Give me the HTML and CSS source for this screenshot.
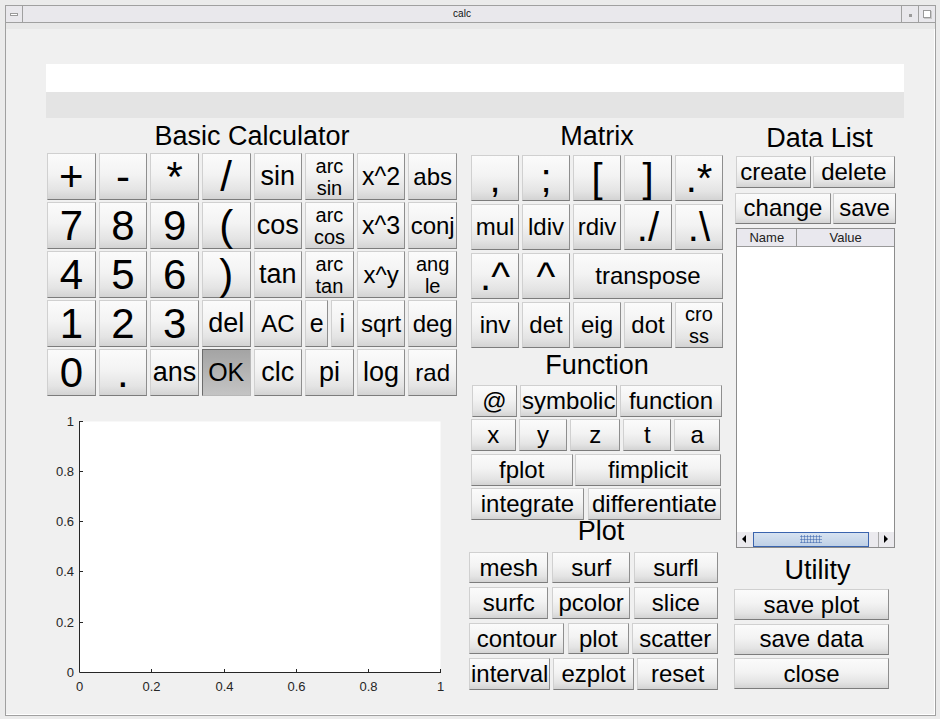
FILE: index.html
```html
<!DOCTYPE html>
<html lang="en">
<head>
<meta charset="utf-8">
<title>calc</title>
<link rel="stylesheet" href="styles.css">
</head>
<body>
<div class="window">
  <div class="titlebar">
    <div class="tb-box tb-menu"><span class="ico-min"></span></div>
    <div class="tb-title">calc</div>
    <div class="tb-box tb-shade"><span class="ico-dot"></span></div>
    <div class="tb-box tb-max"><span class="ico-max"></span></div>
  </div>
  <div class="menuband"></div>
  <div class="content">
    <div class="display">
      <div class="display-input"></div>
      <div class="display-status"></div>
    </div>
    <div class="main">
      <section class="col-left">
        <h2 class="label">Basic Calculator</h2>
        <div class="calc-grid">
          <button class="btn sym">+</button>
          <button class="btn sym">-</button>
          <button class="btn sym">*</button>
          <button class="btn sym">/</button>
          <button class="btn t27">sin</button>
          <button class="btn"><span class="two">arc<br>sin</span></button>
          <button class="btn t25">x^2</button>
          <button class="btn">abs</button>

          <button class="btn sym">7</button>
          <button class="btn sym">8</button>
          <button class="btn sym">9</button>
          <button class="btn sym">(</button>
          <button class="btn t27">cos</button>
          <button class="btn"><span class="two">arc<br>cos</span></button>
          <button class="btn t25">x^3</button>
          <button class="btn">conj</button>

          <button class="btn sym">4</button>
          <button class="btn sym">5</button>
          <button class="btn sym">6</button>
          <button class="btn sym">)</button>
          <button class="btn t27">tan</button>
          <button class="btn"><span class="two">arc<br>tan</span></button>
          <button class="btn">x^y</button>
          <button class="btn"><span class="two">ang<br>le</span></button>

          <button class="btn sym">1</button>
          <button class="btn sym">2</button>
          <button class="btn sym">3</button>
          <button class="btn t27">del</button>
          <button class="btn">AC</button>
          <div class="split">
            <button class="btn t25">e</button>
            <button class="btn t25">i</button>
          </div>
          <button class="btn">sqrt</button>
          <button class="btn">deg</button>

          <button class="btn sym">0</button>
          <button class="btn sym">.</button>
          <button class="btn t27">ans</button>
          <button class="btn pressed">OK</button>
          <button class="btn t27">clc</button>
          <button class="btn t27">pi</button>
          <button class="btn t27">log</button>
          <button class="btn">rad</button>
        </div>
        <svg class="axes" width="410" height="300" viewBox="0 0 410 300">
          <rect x="32.5" y="25.5" width="361" height="251" fill="#fff"/>
          <g stroke="#262626" stroke-width="1" fill="none">
            <path d="M32.5 25V276.5H394"/>
            <path d="M104.5 276.5v-3.5M177.5 276.5v-3.5M249.5 276.5v-3.5M321.5 276.5v-3.5M393.5 276.5v-3.5"/>
            <path d="M32.5 226.5h3.5M32.5 175.5h3.5M32.5 125.5h3.5M32.5 75.5h3.5M32.5 25.5h3.5"/>
          </g>
          <g class="ticklabels" fill="#262626" text-anchor="middle">
            <text x="32.5" y="295">0</text>
            <text x="104.5" y="295">0.2</text>
            <text x="177.5" y="295">0.4</text>
            <text x="249.5" y="295">0.6</text>
            <text x="321.5" y="295">0.8</text>
            <text x="393.5" y="295">1</text>
          </g>
          <g class="ticklabels" fill="#262626" text-anchor="end">
            <text x="27" y="281">0</text>
            <text x="27" y="231">0.2</text>
            <text x="27" y="180">0.4</text>
            <text x="27" y="130">0.6</text>
            <text x="27" y="80">0.8</text>
            <text x="27" y="30">1</text>
          </g>
        </svg>
      </section>

      <section class="col-mid">
        <h2 class="label">Matrix</h2>
        <div class="mat-grid">
          <button class="btn msym">,</button>
          <button class="btn msym">;</button>
          <button class="btn msym">[</button>
          <button class="btn msym">]</button>
          <button class="btn msym">.*</button>

          <button class="btn">mul</button>
          <button class="btn">ldiv</button>
          <button class="btn">rdiv</button>
          <button class="btn msym">./</button>
          <button class="btn msym">.\</button>

          <button class="btn msym">.^</button>
          <button class="btn msym">^</button>
          <button class="btn span3">transpose</button>

          <button class="btn">inv</button>
          <button class="btn">det</button>
          <button class="btn">eig</button>
          <button class="btn">dot</button>
          <button class="btn"><span class="two">cro<br>ss</span></button>
        </div>

        <h2 class="label fn-label">Function</h2>
        <div class="rows fn-rows">
          <div class="row fn-r1">
            <button class="btn">@</button>
            <button class="btn">symbolic</button>
            <button class="btn">function</button>
          </div>
          <div class="row fn-r2">
            <button class="btn">x</button>
            <button class="btn">y</button>
            <button class="btn">z</button>
            <button class="btn">t</button>
            <button class="btn">a</button>
          </div>
          <div class="row fn-r3">
            <button class="btn">fplot</button>
            <button class="btn">fimplicit</button>
          </div>
          <div class="row fn-r4">
            <button class="btn">integrate</button>
            <button class="btn">differentiate</button>
          </div>
        </div>

        <h2 class="label plot-label">Plot</h2>
        <div class="rows pl-rows">
          <div class="row pl-r12">
            <button class="btn">mesh</button>
            <button class="btn">surf</button>
            <button class="btn">surfl</button>
          </div>
          <div class="row pl-r12">
            <button class="btn">surfc</button>
            <button class="btn">pcolor</button>
            <button class="btn">slice</button>
          </div>
          <div class="row pl-r3">
            <button class="btn">contour</button>
            <button class="btn">plot</button>
            <button class="btn">scatter</button>
          </div>
          <div class="row pl-r4">
            <button class="btn">interval</button>
            <button class="btn">ezplot</button>
            <button class="btn">reset</button>
          </div>
        </div>
      </section>

      <section class="col-right">
        <h2 class="label dl-label">Data List</h2>
        <div class="row dl-r1">
          <button class="btn">create</button>
          <button class="btn">delete</button>
        </div>
        <div class="row dl-r2">
          <button class="btn">change</button>
          <button class="btn">save</button>
        </div>
        <div class="table">
          <div class="thead">
            <div class="th th-name">Name</div>
            <div class="th th-value">Value</div>
          </div>
          <div class="tbody"></div>
          <div class="hscroll">
            <div class="sb-arrow sb-left">
              <svg width="5" height="8" viewBox="0 0 5 8"><polygon points="5,0 5,8 1,4" fill="#000"/></svg>
            </div>
            <div class="sb-thumb"><span class="grip"></span></div>
            <div class="sb-track"></div>
            <div class="sb-arrow sb-right">
              <svg width="5" height="8" viewBox="0 0 5 8"><polygon points="0,0 0,8 4,4" fill="#000"/></svg>
            </div>
          </div>
        </div>

        <h2 class="label ut-label">Utility</h2>
        <div class="rows ut-rows">
          <button class="btn ut-btn">save plot</button>
          <button class="btn ut-btn">save data</button>
          <button class="btn ut-btn">close</button>
        </div>
      </section>
    </div>
  </div>
</div>
</body>
</html>
```
FILE: styles.css
```css
* { box-sizing: border-box; }

html, body {
  margin: 0;
  padding: 0;
}

body {
  width: 940px;
  height: 719px;
  overflow: hidden;
  background: #ebebeb;
  font-family: "Liberation Sans", Arial, sans-serif;
}

.window {
  margin: 5px 0 0 5px;
  width: 931px;
  height: 711px;
  border: 1px solid #a0a0a0;
  background: #f0f0f0;
  display: flex;
  flex-direction: column;
  box-shadow: inset -1px -1px 0 #ffffff;
}

/* title bar */
.titlebar {
  flex: none;
  height: 17px;
  display: flex;
  background: #e9e8ec;
  border-bottom: 1px solid #a0a0a0;
}

.tb-box {
  flex: none;
  width: 17px;
  display: flex;
  align-items: center;
  justify-content: center;
}

.tb-menu { border-right: 1px solid #a0a0a0; }
.tb-shade { border-left: 1px solid #a0a0a0; }
.tb-max { border-left: 1px solid #a0a0a0; }

.tb-title {
  flex: 1;
  text-align: center;
  font-size: 10px;
  line-height: 16px;
  color: #111;
}

.ico-min {
  display: block;
  width: 8px;
  height: 3px;
  background: #fff;
  border: 1px solid #9a9a9a;
}

.ico-dot {
  display: block;
  width: 3px;
  height: 3px;
  margin: 2px 0 0 0;
  background: #9a9a9a;
}

.ico-max {
  display: block;
  width: 8px;
  height: 8px;
  background: #fff;
  border: 1px solid #9a9a9a;
  box-shadow: 1px 1px 0 #c8c8c8;
}

.menuband {
  flex: none;
  height: 6px;
  background: #e8e8e8;
}

.content {
  flex: 1;
  padding: 35px 0 0 40px;
}

/* display */
.display { width: 858px; }
.display-input { height: 28px; background: #ffffff; }
.display-status { height: 26px; background: #e4e4e4; }

.main {
  display: flex;
  align-items: flex-start;
  margin-top: 3px;
}

.col-left { width: 410px; margin-left: 1px; }
.col-mid { width: 256px; margin-left: 12px; }
.col-right { width: 163px; margin-left: 9px; }

.label {
  margin: 0;
  font-weight: normal;
  font-size: 27px;
  line-height: 30px;
  text-align: center;
  color: #000;
  white-space: nowrap;
}

/* buttons */
.btn {
  margin: 0;
  padding: 0;
  font-family: "Liberation Sans", Arial, sans-serif;
  font-size: 24px;
  line-height: 1;
  color: #000;
  border: 1px solid;
  border-color: #d0d0d0 #8e8e8e #7c7c7c #d0d0d0;
  border-radius: 0;
  background: linear-gradient(to bottom, #fbfbfb 0%, #f3f3f3 45%, #e4e4e4 80%, #d3d3d3 100%);
  display: flex;
  align-items: center;
  justify-content: center;
  white-space: nowrap;
  min-width: 0;
}

.btn.pressed {
  background: linear-gradient(to bottom, #a4a4a4 0%, #b4b4b4 50%, #c4c4c4 100%);
  border-color: #6c6c6c #b8b8b8 #b8b8b8 #6c6c6c;
  font-size: 25px;
}

.btn.sym { font-size: 42px; }
.btn.msym { font-size: 40px; }
.btn.t27 { font-size: 27px; }
.btn.t25 { font-size: 25px; }

.two {
  display: block;
  font-size: 20px;
  line-height: 22px;
  text-align: center;
}

/* calculator grid */
.calc-grid {
  margin-top: 2px;
  display: grid;
  grid-template-columns: repeat(8, 1fr);
  grid-auto-rows: 47px;
  gap: 2px 3px;
}

.split {
  display: flex;
  gap: 2.6px;
}

.split .btn { flex: 1; }

.axes {
  display: block;
}

.ticklabels {
  font-family: "Liberation Sans", Arial, sans-serif;
  font-size: 13px;
}

/* matrix */
.mat-grid {
  margin: 4px 0 0 1.7px;
  width: 252.6px;
  display: grid;
  grid-template-columns: repeat(5, 1fr);
  grid-auto-rows: 46px;
  gap: 3px 2.4px;
}

.span3 { grid-column: span 3; }

.rows {
  display: flex;
  flex-direction: column;
}

.row {
  display: grid;
}

/* function */
.fn-label { margin-top: 1.6px; }

.fn-rows {
  margin-top: 5px;
  gap: 2.6px;
}

.fn-rows .row { height: 32px; }

.fn-r1 {
  margin-left: 2.7px;
  grid-template-columns: 45.6px 97px 101.4px;
  column-gap: 3px;
}

.fn-r2 {
  margin-left: 1.7px;
  grid-template-columns: 45px 48.6px 50px 48px 46px;
  column-gap: 3px;
}

.fn-r3 {
  margin-left: 1.7px;
  grid-template-columns: 102px 145.4px;
  column-gap: 2.6px;
}

.fn-r4 {
  margin-left: 1.7px;
  grid-template-columns: 113.6px 132.4px;
  column-gap: 4px;
}

/* plot */
.plot-label {
  margin-top: -0.8px;
  line-height: 22px;
  padding-left: 8px;
}

.pl-rows {
  margin-top: 10.4px;
  gap: 4.2px;
}

.pl-rows .row {
  height: 31.3px;
  margin-left: 0.3px;
}

.pl-r12 {
  grid-template-columns: 79px 78.3px 83.7px;
  column-gap: 3.7px;
}

.pl-r3 {
  grid-template-columns: 95px 61px 86px;
  column-gap: 3.5px;
}

.pl-r4 {
  grid-template-columns: 80.7px 80.5px 81.2px;
  column-gap: 3.3px;
}

/* data list */
.dl-label {
  margin-top: 1.6px;
  padding-left: 8px;
}

.dl-r1 {
  margin: 3.1px 0 0 2.3px;
  height: 32.6px;
  grid-template-columns: 74.4px 82.3px;
  column-gap: 2px;
}

.dl-r2 {
  margin: 4.4px 0 0 1.3px;
  height: 31.6px;
  grid-template-columns: 95.4px 62.4px;
  column-gap: 2.6px;
}

.table {
  margin: 4px 0 0 2.3px;
  width: 158.7px;
  height: 319.4px;
  border: 1px solid #8c8c8c;
  background: #ffffff;
  display: flex;
  flex-direction: column;
}

.thead {
  flex: none;
  height: 18px;
  display: flex;
  background: #e9e8ee;
  border-bottom: 1px solid #9a9a9a;
  font-size: 13px;
  line-height: 17px;
  color: #222;
}

.th { text-align: center; }
.th-name { width: 60px; border-right: 1px solid #9a9a9a; }
.th-value { flex: 1; }

.tbody { flex: 1; }

.hscroll {
  flex: none;
  height: 15px;
  display: flex;
  background: #ebeaee;
}

.sb-arrow {
  flex: none;
  width: 16px;
  display: flex;
  align-items: center;
  justify-content: center;
  background: #ebeaee;
}

.sb-left svg { margin-left: -3px; }
.sb-right { border-left: 1px solid #a8a8a8; }
.sb-right svg { margin-left: 1px; }

.sb-thumb {
  flex: none;
  width: 116px;
  border: 1px solid #3a64ae;
  background: linear-gradient(to bottom, #d7e3f1, #bfd0e6);
  display: flex;
  align-items: center;
  justify-content: center;
}

.grip {
  display: block;
  width: 22px;
  height: 8px;
  background: radial-gradient(circle, #5a7dba 0.9px, transparent 1.2px) 0 0 / 3px 3px;
}

.sb-track { flex: 1; }

/* utility */
.ut-label {
  margin-top: 6.9px;
  padding-left: 4px;
}

.ut-rows {
  margin-top: 4.4px;
  gap: 3.3px;
  width: 155px;
}

.ut-btn { height: 31.3px; }
```
